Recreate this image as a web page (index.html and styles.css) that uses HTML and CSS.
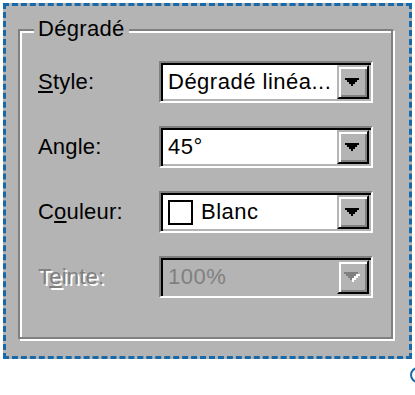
FILE: index.html
```html
<!DOCTYPE html>
<html lang="fr">
<head>
<meta charset="utf-8">
<title>Dégradé</title>
<link rel="stylesheet" href="styles.css">
</head>
<body>
<div class="frame">
  <div class="group">
    <div class="legend">Dégradé</div>
    <div class="row">
      <span class="label"><u>S</u>tyle:</span>
      <div class="combo">
        <span class="value">Dégradé linéa...</span>
        <span class="btn"><svg class="arrow" width="14" height="8" viewBox="0 0 14 8"><path d="M0 0h14v2h-2v2h-2v2h-2v2h-2v-2h-2v-2h-2v-2h-2z"/></svg></span>
      </div>
    </div>
    <div class="row">
      <span class="label">Angle:</span>
      <div class="combo">
        <span class="value">45°</span>
        <span class="btn"><svg class="arrow" width="14" height="8" viewBox="0 0 14 8"><path d="M0 0h14v2h-2v2h-2v2h-2v2h-2v-2h-2v-2h-2v-2h-2z"/></svg></span>
      </div>
    </div>
    <div class="row">
      <span class="label">C<u>o</u>uleur:</span>
      <div class="combo">
        <span class="value"><span class="swatch"></span>Blanc</span>
        <span class="btn"><svg class="arrow" width="14" height="8" viewBox="0 0 14 8"><path d="M0 0h14v2h-2v2h-2v2h-2v2h-2v-2h-2v-2h-2v-2h-2z"/></svg></span>
      </div>
    </div>
    <div class="row">
      <span class="label disabled">T<u>e</u>inte:</span>
      <div class="combo disabled">
        <span class="value">100%</span>
        <span class="btn"><svg class="arrow" width="16" height="10" viewBox="0 0 16 10"><path class="hl" d="M2 2h14v2h-2v2h-2v2h-2v2h-2v-2h-2v-2h-2v-2h-2z"/><path class="sh" d="M0 0h14v2h-2v2h-2v2h-2v2h-2v-2h-2v-2h-2v-2h-2z"/></svg></span>
      </div>
    </div>
  </div>
</div>
<div class="handle"></div>
</body>
</html>
```

FILE: styles.css
```css
html, body {
  margin: 0;
  padding: 0;
  overflow: hidden;
  background: #fff;
}

body {
  width: 415px;
  height: 395px;
  font-family: "Liberation Sans", Arial, sans-serif;
  font-size: 22px;
  color: #000;
}

.frame {
  box-sizing: border-box;
  width: 409px;
  height: 356px;
  margin: 3px 0 0 3px;
  border: 3px dashed #1769aa;
  background: #b4b4b4;
  padding: 23px 0 0 12px;
}

.group {
  position: relative;
  box-sizing: border-box;
  width: 375px;
  height: 310px;
  border: 2px solid #808080;
  box-shadow: inset 2px 2px 0 #fff, 2px 2px 0 #fff;
  padding: 30px 18px 0 18px;
  display: flex;
  flex-direction: column;
  gap: 23px;
}

.legend {
  position: absolute;
  left: 14px;
  top: -15px;
  padding: 0 4px;
  line-height: 26px;
  background: #b4b4b4;
  letter-spacing: 0.3px;
}

.row {
  display: flex;
  align-items: center;
  height: 42px;
}

.label {
  width: 121px;
  flex: none;
  white-space: nowrap;
  letter-spacing: 0.2px;
}

u {
  text-decoration-thickness: 2px;
  text-underline-offset: 2px;
}

.label.disabled {
  color: #808080;
  text-shadow: 2px 2px 0 #fff;
}

.combo {
  box-sizing: border-box;
  width: 214px;
  height: 42px;
  padding: 2px;
  border: 2px solid;
  border-color: #808080 #fff #fff #808080;
  box-shadow: inset 2px 2px 0 #000, inset -2px -2px 0 #b4b4b4;
  background: #fff;
  display: flex;
  align-items: center;
}

.combo.disabled {
  background: #b4b4b4;
  color: #808080;
}

.value {
  flex: 1;
  display: flex;
  align-items: center;
  padding-left: 5px;
  white-space: nowrap;
  overflow: hidden;
  letter-spacing: 0.5px;
}

.swatch {
  box-sizing: border-box;
  width: 25px;
  height: 25px;
  border: 2px solid #000;
  background: #fff;
  margin-right: 8px;
  flex: none;
}

.btn {
  box-sizing: border-box;
  width: 32px;
  height: 34px;
  flex: none;
  align-self: flex-end;
  background: #b4b4b4;
  border: 2px solid;
  border-color: #b4b4b4 #000 #000 #b4b4b4;
  box-shadow: inset 2px 2px 0 #fff, inset -2px -2px 0 #808080;
  display: flex;
  align-items: center;
  justify-content: center;
  padding-right: 2px;
}

.arrow {
  display: block;
  fill: #000;
}

.arrow .hl {
  fill: #fff;
}

.arrow .sh {
  fill: #808080;
}

.handle {
  position: absolute;
  left: 410px;
  top: 367px;
  width: 16px;
  height: 16px;
  box-sizing: border-box;
  border: 2px solid #1769aa;
  border-radius: 50%;
}
```
